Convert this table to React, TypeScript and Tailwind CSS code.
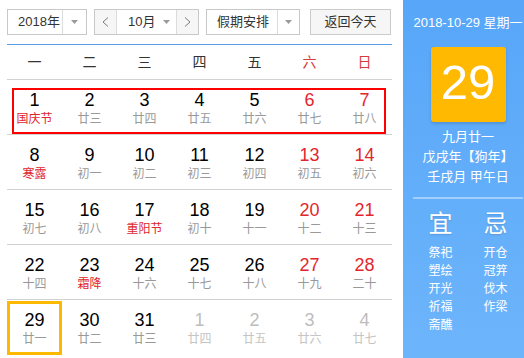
const rows: [string, string, string?][][] = [
  [["1", "国庆节", "hol"], ["2", "廿三"], ["3", "廿四"], ["4", "廿五"], ["5", "廿六"], ["6", "廿七"], ["7", "廿八"]],
  [["8", "寒露", "hol"], ["9", "初一"], ["10", "初二"], ["11", "初三"], ["12", "初四"], ["13", "初五"], ["14", "初六"]],
  [["15", "初七"], ["16", "初八"], ["17", "重阳节", "hol"], ["18", "初十"], ["19", "十一"], ["20", "十二"], ["21", "十三"]],
  [["22", "十四"], ["23", "霜降", "hol"], ["24", "十六"], ["25", "十七"], ["26", "十八"], ["27", "十九"], ["28", "二十"]],
  [["29", "廿一", "today"], ["30", "廿二"], ["31", "廿三"], ["1", "廿四", "out"], ["2", "廿五", "out"], ["3", "廿六", "out"], ["4", "廿七", "out"]],
];

const weekdays = ["一", "二", "三", "四", "五", "六", "日"];

function Caret() {
  return (
    <svg width="7" height="4" viewBox="0 0 7 4">
      <path d="M0 0h7L3.5 4z" fill="#9a9a9a" />
    </svg>
  );
}

function Chevron({ dir }: { dir: "l" | "r" }) {
  return (
    <svg width="7" height="10" viewBox="0 0 7 10">
      <polyline
        points={dir === "l" ? "6,0.5 1,5 6,9.5" : "1,0.5 6,5 1,9.5"}
        fill="none"
        stroke="#7a7a7a"
        strokeWidth="1"
      />
    </svg>
  );
}

function Day({ num, lunar, kind, col }: { num: string; lunar: string; kind?: string; col: number }) {
  const weekend = col >= 5;
  let numColor = weekend ? "text-[#e3262d]" : "text-black";
  let lunarColor = "text-[#999]";
  if (kind === "hol") lunarColor = "text-[#e0262c]";
  if (kind === "out") {
    numColor = "text-[#bdbdbd]";
    lunarColor = "text-[#c4c4c4]";
  }
  return (
    <div className="relative flex flex-col items-center pt-[10px]">
      {kind === "today" && (
        <div className="absolute inset-x-0 top-[1px] bottom-0 border-[3px] border-[#fdb800]" />
      )}
      <span className={`text-[18px] leading-[20px] ${numColor}`}>{num}</span>
      <span className={`text-[12px] leading-[19px] ${lunarColor}`}>{lunar}</span>
    </div>
  );
}

export default function App() {
  return (
    <div className="flex w-[524px] h-[358px] overflow-hidden bg-white font-['Liberation_Sans','Noto_Sans_CJK_SC',sans-serif]">
      {/* Calendar */}
      <div className="w-[403px] shrink-0 pl-[7px] pr-[11px] pt-[9px]">
        <div className="flex h-[26px] text-[13px] text-[#333]">
          <div className="flex w-[80px] border border-[#c8c8c8]">
            <div className="flex w-[54px] items-center pl-[10px]">2018年</div>
            <div className="flex flex-1 items-center justify-center border-l border-[#dcdcdc]">
              <Caret />
            </div>
          </div>
          <div className="ml-[7px] flex w-[105px] border border-[#c8c8c8]">
            <div className="flex w-[22px] items-center justify-center bg-[#f6f6f6] border-r border-[#dcdcdc]">
              <Chevron dir="l" />
            </div>
            <div className="flex w-[59px] items-center pl-[11px] gap-[8px]">
              10月
              <Caret />
            </div>
            <div className="flex flex-1 items-center justify-center bg-[#f6f6f6] border-l border-[#dcdcdc]">
              <Chevron dir="r" />
            </div>
          </div>
          <div className="ml-[7px] flex w-[94px] border border-[#c8c8c8]">
            <div className="flex w-[70px] items-center pl-[10px]">假期安排</div>
            <div className="flex flex-1 items-center justify-center border-l border-[#dcdcdc]">
              <Caret />
            </div>
          </div>
          <div className="ml-[10px] flex w-[81px] items-center justify-center border border-[#cbcbcb] bg-[#f6f6f6]">
            返回今天
          </div>
        </div>

        <div className="mt-[9px] h-px bg-[#5d9de6]" />

        <div className="grid h-[35px] grid-cols-7 border-b border-[#d2d2d2] text-[14px]">
          {weekdays.map((w, i) => (
            <div
              key={w}
              className={`flex items-center justify-center ${i >= 5 ? "text-[#d83a3a]" : "text-[#333]"}`}
            >
              {w}
            </div>
          ))}
        </div>

        {rows.map((row, r) => (
          <div
            key={r}
            className={`relative grid h-[55px] grid-cols-7 ${r < rows.length - 1 ? "border-b border-[#d2d2d2]" : ""}`}
          >
            {row.map(([n, l, k], c) => (
              <Day key={c} num={n} lunar={l} kind={k} col={c} />
            ))}
            {r === 0 && (
              <div className="pointer-events-none absolute left-[5px] right-[6px] top-[8px] bottom-0 border-2 border-[#ff0000]" />
            )}
          </div>
        ))}
      </div>

      {/* Side panel */}
      <div className="w-[130px] shrink-0 bg-gradient-to-b from-[#57a6f9] to-[#6db5fb] pt-[13px] text-white">
        <div className="whitespace-nowrap text-center text-[13px] leading-[20px]">2018-10-29 星期一</div>
        <div className="mx-auto mt-[14px] flex h-[75px] w-[75px] items-center justify-center rounded-[3px] bg-[#ffb900] pb-[4px] text-[49px] leading-none shadow-[0_2px_3px_rgba(0,0,0,0.15)]">
          29
        </div>
        <div className="mt-[5px] text-center text-[13px] leading-[20px]">
          <div>九月廿一</div>
          <div>戊戌年【狗年】</div>
          <div>壬戌月 甲午日</div>
        </div>
        <div className="mx-[10px] mt-[10px] h-[2px] bg-white/40" />
        <div className="mt-[10px] grid grid-cols-2 px-[10px]">
          <div className="flex flex-col items-center">
            <span className="text-[24px] leading-[30px] [text-shadow:0_1px_2px_rgba(0,0,0,0.15)]">宜</span>
            <div className="mt-[5px] flex flex-col text-[12px] leading-[18px]">
              <span>祭祀</span>
              <span>塑绘</span>
              <span>开光</span>
              <span>祈福</span>
              <span>斋醮</span>
            </div>
          </div>
          <div className="flex flex-col items-center">
            <span className="text-[24px] leading-[30px] [text-shadow:0_1px_2px_rgba(0,0,0,0.15)]">忌</span>
            <div className="mt-[5px] flex flex-col text-[12px] leading-[18px]">
              <span>开仓</span>
              <span>冠笄</span>
              <span>伐木</span>
              <span>作梁</span>
            </div>
          </div>
        </div>
      </div>
    </div>
  );
}
